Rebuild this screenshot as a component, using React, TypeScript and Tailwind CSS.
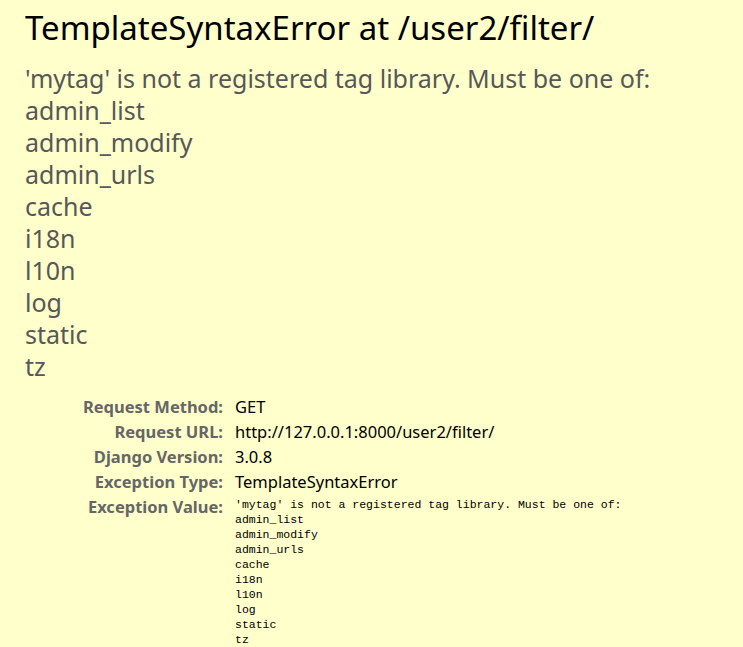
import React from "react";

const tags = ["admin_list", "admin_modify", "admin_urls", "cache", "i18n", "l10n", "log", "static", "tz"];

const meta: [string, string][] = [
  ["Request Method:", "GET"],
  ["Request URL:", "http://127.0.0.1:8000/user2/filter/"],
  ["Django Version:", "3.0.8"],
  ["Exception Type:", "TemplateSyntaxError"],
];

const message = "'mytag' is not a registered tag library. Must be one of:";

export default function App() {
  return (
    <div className="min-h-[647px] bg-[#ffffcc] pl-[25px] pt-[6px] font-['Noto_Sans',sans-serif]">
      {/* 标题 */}
      <h1 className="text-[33px] leading-[44px] font-normal text-black">TemplateSyntaxError at /user2/filter/</h1>
      {/* 异常信息 */}
      <div className="mt-[12px] text-[25px] leading-[32px] text-[#575757]">
        <div>{message}</div>
        {tags.map((t) => (
          <div key={t}>{t}</div>
        ))}
      </div>
      {/* 元信息表 */}
      <div className="mt-[12px] grid grid-cols-[210px_1fr] text-[16.5px] leading-[25px]">
        {meta.map(([k, v]) => (
          <React.Fragment key={k}>
            <div className="pr-[12px] text-right font-bold text-[#666666]">{k}</div>
            <div className="text-black">{v}</div>
          </React.Fragment>
        ))}
        <div className="pr-[12px] text-right font-bold text-[#666666]">Exception Value:</div>
        <pre className="pt-[3px] font-['Liberation_Mono',monospace] text-[11.5px] leading-[15px] text-black">
          {[message, ...tags].join("\n")}
        </pre>
      </div>
    </div>
  );
}
